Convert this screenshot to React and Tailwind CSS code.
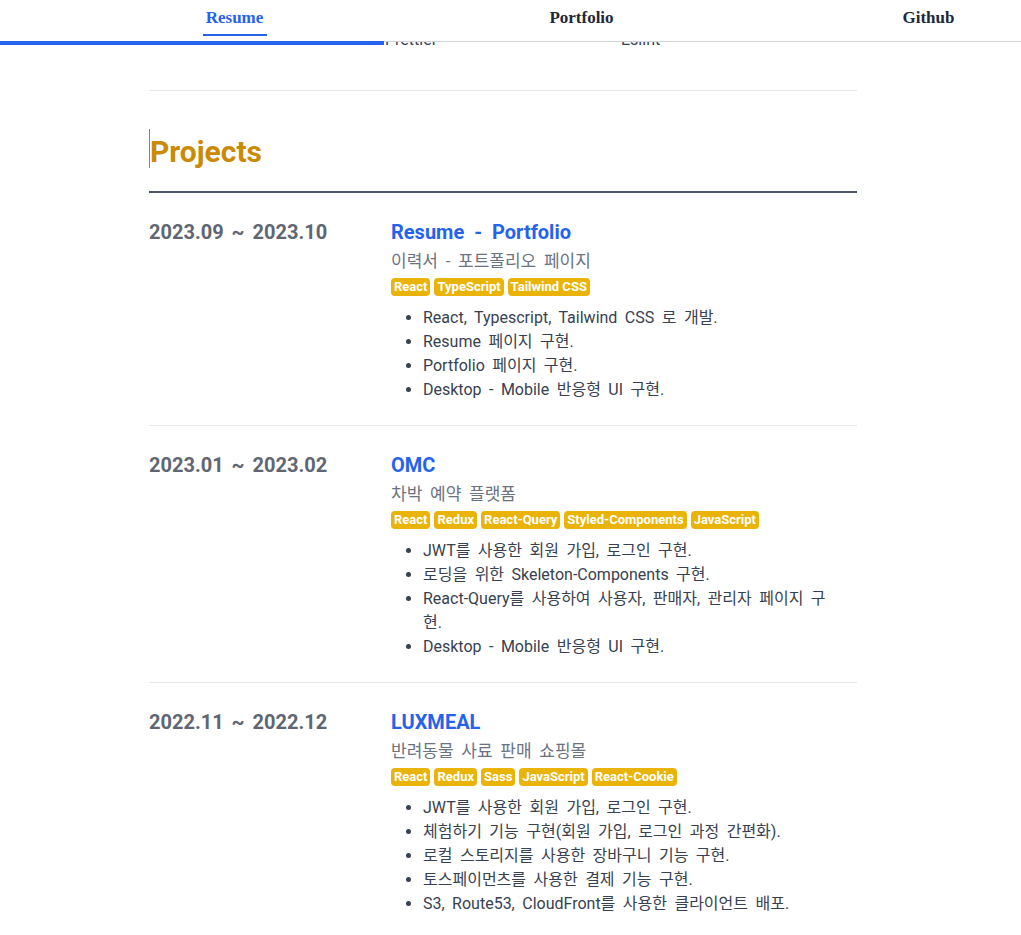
import React from "react";

const projects = [
  {
    date: "2023.09 ~ 2023.10",
    title: "Resume - Portfolio",
    sub: "이력서 - 포트폴리오 페이지",
    tags: ["React", "TypeScript", "Tailwind CSS"],
    items: [
      "React, Typescript, Tailwind CSS 로 개발.",
      "Resume 페이지 구현.",
      "Portfolio 페이지 구현.",
      "Desktop - Mobile 반응형 UI 구현.",
    ],
  },
  {
    date: "2023.01 ~ 2023.02",
    title: "OMC",
    sub: "차박 예약 플랫폼",
    tags: ["React", "Redux", "React-Query", "Styled-Components", "JavaScript"],
    items: [
      "JWT를 사용한 회원 가입, 로그인 구현.",
      "로딩을 위한 Skeleton-Components 구현.",
      "React-Query를 사용하여 사용자, 판매자, 관리자 페이지 구현.",
      "Desktop - Mobile 반응형 UI 구현.",
    ],
  },
  {
    date: "2022.11 ~ 2022.12",
    title: "LUXMEAL",
    sub: "반려동물 사료 판매 쇼핑몰",
    tags: ["React", "Redux", "Sass", "JavaScript", "React-Cookie"],
    items: [
      "JWT를 사용한 회원 가입, 로그인 구현.",
      "체험하기 기능 구현(회원 가입, 로그인 과정 간편화).",
      "로컬 스토리지를 사용한 장바구니 기능 구현.",
      "토스페이먼츠를 사용한 결제 기능 구현.",
      "S3, Route53, CloudFront를 사용한 클라이언트 배포.",
    ],
  },
];

function NavItem({ label, active }) {
  return (
    <div className="w-[347px] shrink-0 flex justify-center">
      <div className="flex flex-col items-center pt-[6px]">
        <span
          className={
            "leading-6 text-[17px] font-bold " +
            (active ? "text-[#2563eb]" : "text-[#1f2937]")
          }
        >
          {label}
        </span>
        <div
          className={
            "mt-[4px] h-[2px] w-[64px] " + (active ? "bg-[#2563eb]" : "bg-transparent")
          }
        />
      </div>
    </div>
  );
}

export default function App() {
  return (
    <div
      className="min-h-screen bg-white text-[#374151]"
      style={{ fontFamily: "Roboto, 'Noto Sans CJK KR', sans-serif" }}
    >
      <header className="fixed top-0 left-0 right-0 z-10 h-[42px] bg-white border-b border-[#d1d5db] overflow-hidden">
        <nav
          className="flex ml-[61px] h-[41px]"
          style={{ fontFamily: "'Liberation Serif', serif" }}
        >
          <NavItem label="Resume" active />
          <NavItem label="Portfolio" />
          <NavItem label="Github" />
        </nav>
      </header>
      <div className="fixed left-0 top-[41px] z-20 h-[4px] w-[384px] bg-[#2563eb]" />

      <div className="w-[1006px]">
        <main className="mx-auto w-[708px]">
          <div className="grid grid-cols-3 pt-[28px] pb-[38px] leading-6 text-[16px] text-[#374151]">
            <span></span>
            <span>Prettier</span>
            <span>Eslint</span>
          </div>
          <hr className="border-0 border-t border-[#e5e7eb]" />

          <section>
            <h2 className="mt-[38px] h-[39px] pt-[7px] leading-[32px] text-[30px] font-bold text-[#ca8a04] border-l border-[#b7800f]">
              Projects
            </h2>
            <div className="mt-[23px] border-t-2 border-[#4b5563]" />

            {projects.map((p, i) => (
              <div
                key={p.title}
                className={
                  "grid grid-cols-[242px_1fr] pt-[23px] pb-[23px] " +
                  (i < projects.length - 1 ? "border-b border-[#e5e7eb]" : "")
                }
              >
                <div className="text-[20px] leading-[33px] font-bold text-[#5f6672] [word-spacing:3px]">
                  {p.date}
                </div>
                <div>
                  <h3 className="text-[20px] leading-[33px] font-bold text-[#2563eb] [word-spacing:5px]">
                    {p.title}
                  </h3>
                  <p className="text-[17px] leading-6 text-[#6b7280] [word-spacing:3.5px]">{p.sub}</p>
                  <div className="mt-[5px] flex flex-wrap gap-[4px]">
                    {p.tags.map((t) => (
                      <span
                        key={t}
                        className="h-[18px] leading-[18px] px-[3px] rounded-[4px] bg-[#eab308] text-white text-[13px] font-bold"
                      >
                        {t}
                      </span>
                    ))}
                  </div>
                  <ul className="mt-[10px] list-disc pl-8 pr-6 text-[16px] leading-6 text-[#374151] [word-spacing:3.5px]">
                    {p.items.map((it) => (
                      <li key={it}>{it}</li>
                    ))}
                  </ul>
                </div>
              </div>
            ))}
          </section>
        </main>
      </div>
    </div>
  );
}
